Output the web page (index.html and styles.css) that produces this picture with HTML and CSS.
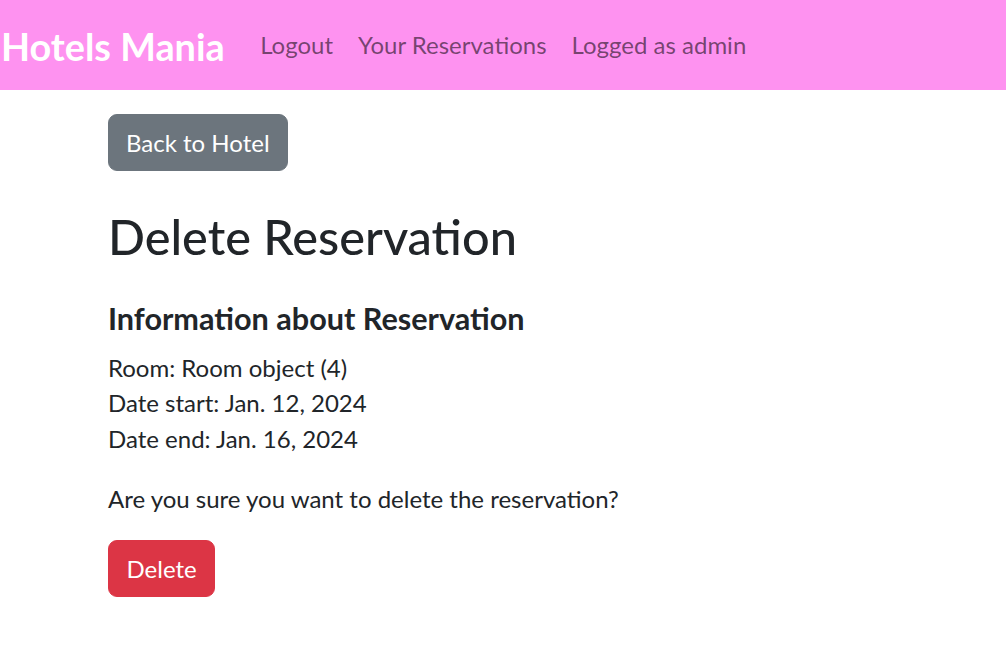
FILE: index.html
```html
<!DOCTYPE html>
<html lang="en">
<head>
<meta charset="utf-8">
<title>Delete Reservation</title>
<link rel="stylesheet" href="styles.css">
</head>
<body>
<nav class="navbar">
  <a class="brand" href="#">Hotels Mania</a>
  <ul class="nav">
    <li><a class="nav-link" href="#">Logout</a></li>
    <li><a class="nav-link" href="#">Your Reservations</a></li>
    <li><span class="nav-link">Logged as admin</span></li>
  </ul>
</nav>
<main class="container">
  <a class="btn btn-secondary" href="#">Back to Hotel</a>
  <h1 class="title">Delete Reservation</h1>
  <h5 class="subtitle">Information about Reservation</h5>
  <p class="info">Room: Room object (4)<br>Date start: Jan. 12, 2024<br>Date end: Jan. 16, 2024</p>
  <p class="question">Are you sure you want to delete the reservation?</p>
  <form class="form">
    <button type="button" class="btn btn-danger">Delete</button>
  </form>
</main>
</body>
</html>
```
FILE: styles.css
```css
* { box-sizing: border-box; }
html, body { margin: 0; padding: 0; }
body {
  font-family: Lato, "Liberation Sans", sans-serif;
  font-size: 24px;
  line-height: 36px;
  color: #212529;
  background: #fff;
}
.navbar {
  height: 90px;
  background: #fe92f0;
  display: flex;
  align-items: center;
  padding: 0 0 0 1px;
}
.brand {
  color: #fff;
  font-weight: 700;
  font-size: 37.8px;
  line-height: 44px;
  text-decoration: none;
  margin-right: 23px;
  margin-top: 4px;
}
.nav {
  display: flex;
  list-style: none;
  margin: 0;
  padding: 0;
}
.nav-link {
  display: block;
  padding: 12px 12.5px;
  color: rgba(0, 0, 0, 0.55);
  text-decoration: none;
  font-size: 24px;
  line-height: 36px;
}
.container {
  padding: 24px 0 0 108px;
}
.btn {
  display: inline-block;
  font-family: inherit;
  font-size: 24px;
  line-height: 36px;
  padding: 8.5px 18px;
  border: 1.5px solid transparent;
  border-radius: 9px;
  color: #fff;
  text-decoration: none;
  cursor: pointer;
}
.btn-secondary { background: #6c757d; border-color: #6c757d; padding: 9.5px 17px; }
.btn-danger { background: #dc3545; border-color: #dc3545; padding: 9.5px 17.5px; }
.title {
  font-size: 48.7px;
  font-weight: 500;
  line-height: 57.6px;
  margin: 37px 0 0;
}
.subtitle {
  font-size: 30.6px;
  font-weight: 700;
  line-height: 36px;
  margin: 35px 0 0;
}
.info {
  margin: 13px 0 0;
  line-height: 35.5px;
}
.question {
  margin: 25px 0 0;
}
.form {
  margin: 23px 0 0;
}
```
